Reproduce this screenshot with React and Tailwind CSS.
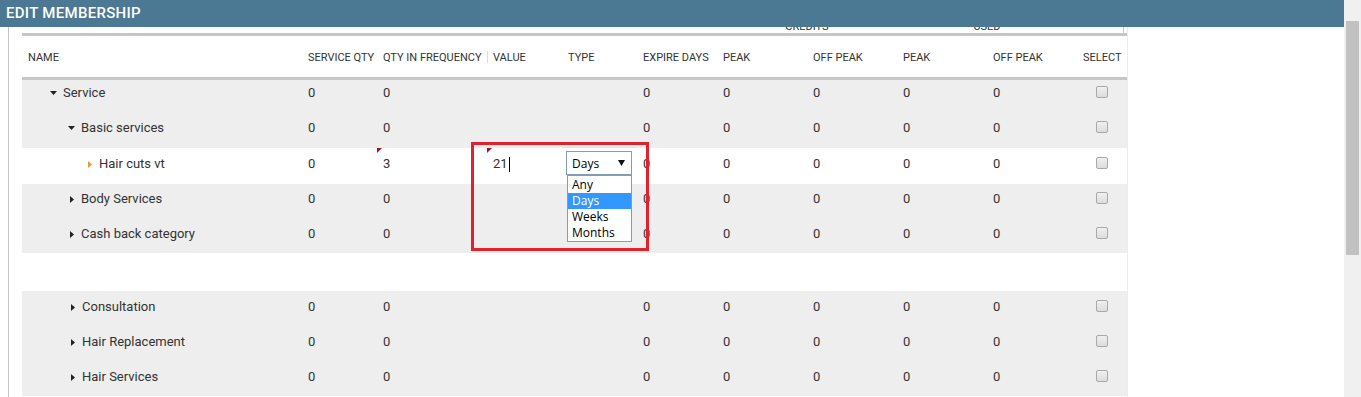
import React from "react";

const GRID =
  "grid grid-cols-[280px_75px_110px_75px_75px_80px_90px_90px_90px_90px_50px]";

const rows = [
  { name: "Service", arrow: "down", indent: "pl-[28px]", cls: "h-[33px] pt-[5px] bg-[#eeeeee]" },
  { name: "Basic services", arrow: "down", indent: "pl-[46px]", cls: "h-[35px] pt-[7px] bg-[#eeeeee]" },
  { name: "Hair cuts vt", arrow: "leaf", indent: "pl-[64px]", cls: "h-[36px] pt-[8px] bg-white", editing: true },
  { name: "Body Services", arrow: "right", indent: "pl-[46px]", cls: "h-[35px] pt-[7px] bg-[#eeeeee]" },
  { name: "Cash back category", arrow: "right", indent: "pl-[46px]", cls: "h-[34px] pt-[7px] bg-[#eeeeee]" },
  { blank: true, cls: "h-[38px] bg-white" },
  { name: "Consultation", arrow: "right", indent: "pl-[47px]", cls: "h-[35px] pt-[8px] bg-[#eeeeee]" },
  { name: "Hair Replacement", arrow: "right", indent: "pl-[47px]", cls: "h-[35px] pt-[8px] bg-[#eeeeee]" },
  { name: "Hair Services", arrow: "right", indent: "pl-[47px]", cls: "h-[35px] pt-[8px] bg-[#eeeeee]" },
];

function Arrow({ type }) {
  if (type === "down")
    return (
      <svg width="7" height="4" viewBox="0 0 7 4">
        <path d="M0 0H7L3.5 4Z" fill="#222" />
      </svg>
    );
  return (
    <svg width="4" height="7" viewBox="0 0 4 7" className="ml-[2px]">
      <path d="M0 0V7L4 3.5Z" fill={type === "leaf" ? "#e6983a" : "#222"} />
    </svg>
  );
}

function Checkbox() {
  return (
    <div className="mt-[1px] h-[12px] w-[12px] rounded-[2px] border border-[#a9a9a9] bg-gradient-to-b from-[#f0f0f0] to-[#dcdcdc]" />
  );
}

function Marker({ className }) {
  return (
    <svg width="5" height="5" viewBox="0 0 5 5" className={className}>
      <path d="M0 0H5L0 5Z" fill="#a3121c" />
    </svg>
  );
}

function Cell({ children, className = "" }) {
  return <div className={"pl-[6px] whitespace-nowrap " + className}>{children}</div>;
}

function Row({ r }) {
  if (r.blank) return <div className={r.cls} />;
  return (
    <div className={GRID + " relative items-start leading-[16px] " + r.cls}>
      <div className={"flex items-center " + r.indent}>
        <div className="flex w-[13px] items-center">
          <Arrow type={r.arrow} />
        </div>
        <span>{r.name}</span>
      </div>
      <Cell>0</Cell>
      <Cell>{r.editing ? "3" : "0"}</Cell>
      <Cell>
        {r.editing ? (
          <span className="inline-flex items-center">
            21<span className="ml-[1px] inline-block h-[15px] w-px bg-black" />
          </span>
        ) : null}
      </Cell>
      <div className="pl-[4px]">
        {r.editing ? (
          <div className="relative -mt-[5px] flex h-[24px] w-[66px] items-center justify-between border border-[#7f9db9] bg-white pl-[5px] pr-[6px] font-['Open_Sans',sans-serif] text-[12px] text-black">
            <span className="pt-px">Days</span>
            <svg width="7" height="6" viewBox="0 0 7 6">
              <path d="M0 0H7L3.5 6Z" fill="#111" />
            </svg>
            <div className="absolute left-[0px] top-[23px] z-10 w-[65px] border border-[#7f9db9] bg-white pt-px leading-[16px]">
              <div className="pl-[4px]">Any</div>
              <div className="bg-[#3298fd] pl-[4px] text-white">Days</div>
              <div className="pl-[4px]">Weeks</div>
              <div className="pl-[4px]">Months</div>
            </div>
          </div>
        ) : null}
      </div>
      <Cell>0</Cell>
      <Cell>0</Cell>
      <Cell>0</Cell>
      <Cell>0</Cell>
      <Cell>0</Cell>
      <div className="flex justify-center">
        <Checkbox />
      </div>
      {r.editing ? (
        <>
          <Marker className="absolute left-[355px] top-0" />
          <Marker className="absolute left-[465px] top-0" />
          <div className="absolute left-[540px] top-[-1px] h-px w-[75px] bg-[#f0e2a6]" />
        </>
      ) : null}
    </div>
  );
}

export default function App() {
  const headers = [
    "NAME",
    "SERVICE QTY",
    "QTY IN FREQUENCY",
    "VALUE",
    "TYPE",
    "EXPIRE DAYS",
    "PEAK",
    "OFF PEAK",
    "PEAK",
    "OFF PEAK",
    "SELECT",
  ];
  return (
    <div className="relative flex h-[397px] w-[1361px] overflow-hidden bg-white font-['Roboto',sans-serif] text-[#333]">
      <div className="flex w-[1344px] flex-col">
        <div className="flex h-[27px] shrink-0 items-center bg-[#4b7892] pl-[6px] text-[15px] font-medium tracking-[0.3px] text-white">
          EDIT MEMBERSHIP
        </div>
        <div className="flex flex-1">
          <div className="ml-[8px] w-px bg-[#c4c4c4]" />
          <div className="ml-[13px] flex w-[1106px] flex-col border-r border-[#ececec]">
            <div className="h-[6px] w-[1102px] overflow-hidden border-r border-[#c8c8c8]">
              <div className={GRID + " -mt-[6px] text-[11px] leading-[11px]"}>
                <div className="col-start-7 col-span-2 text-center">CREDITS</div>
                <div className="col-span-2 text-center">USED</div>
              </div>
            </div>
            <div className="h-[3px] bg-[#c6c6c6]" />
            <div className={GRID + " h-[41px] items-center text-[11px]"}>
              {headers.map((h, i) => (
                <div key={i} className="relative h-full overflow-hidden whitespace-nowrap pl-[6px] leading-[43px]">
                  {h}
                  {i === 3 ? (
                    <span className="absolute left-0 top-[15px] h-[12px] w-px bg-[#e6dfbf]" />
                  ) : null}
                </div>
              ))}
            </div>
            <div className="h-[3px] bg-[#c6c6c6]" />
            <div className="text-[13px]">
              {rows.map((r, i) => (
                <Row key={i} r={r} />
              ))}
            </div>
          </div>
        </div>
      </div>
      <div className="w-[17px] bg-[#f0f0f0] pt-[21px]">
        <div className="ml-[2px] h-[234px] w-[13px] bg-[#c1c1c1]" />
      </div>
      <div className="absolute left-[471px] top-[142px] z-20 h-[109px] w-[178px] border-[3px] border-[#e0222c]" />
    </div>
  );
}
